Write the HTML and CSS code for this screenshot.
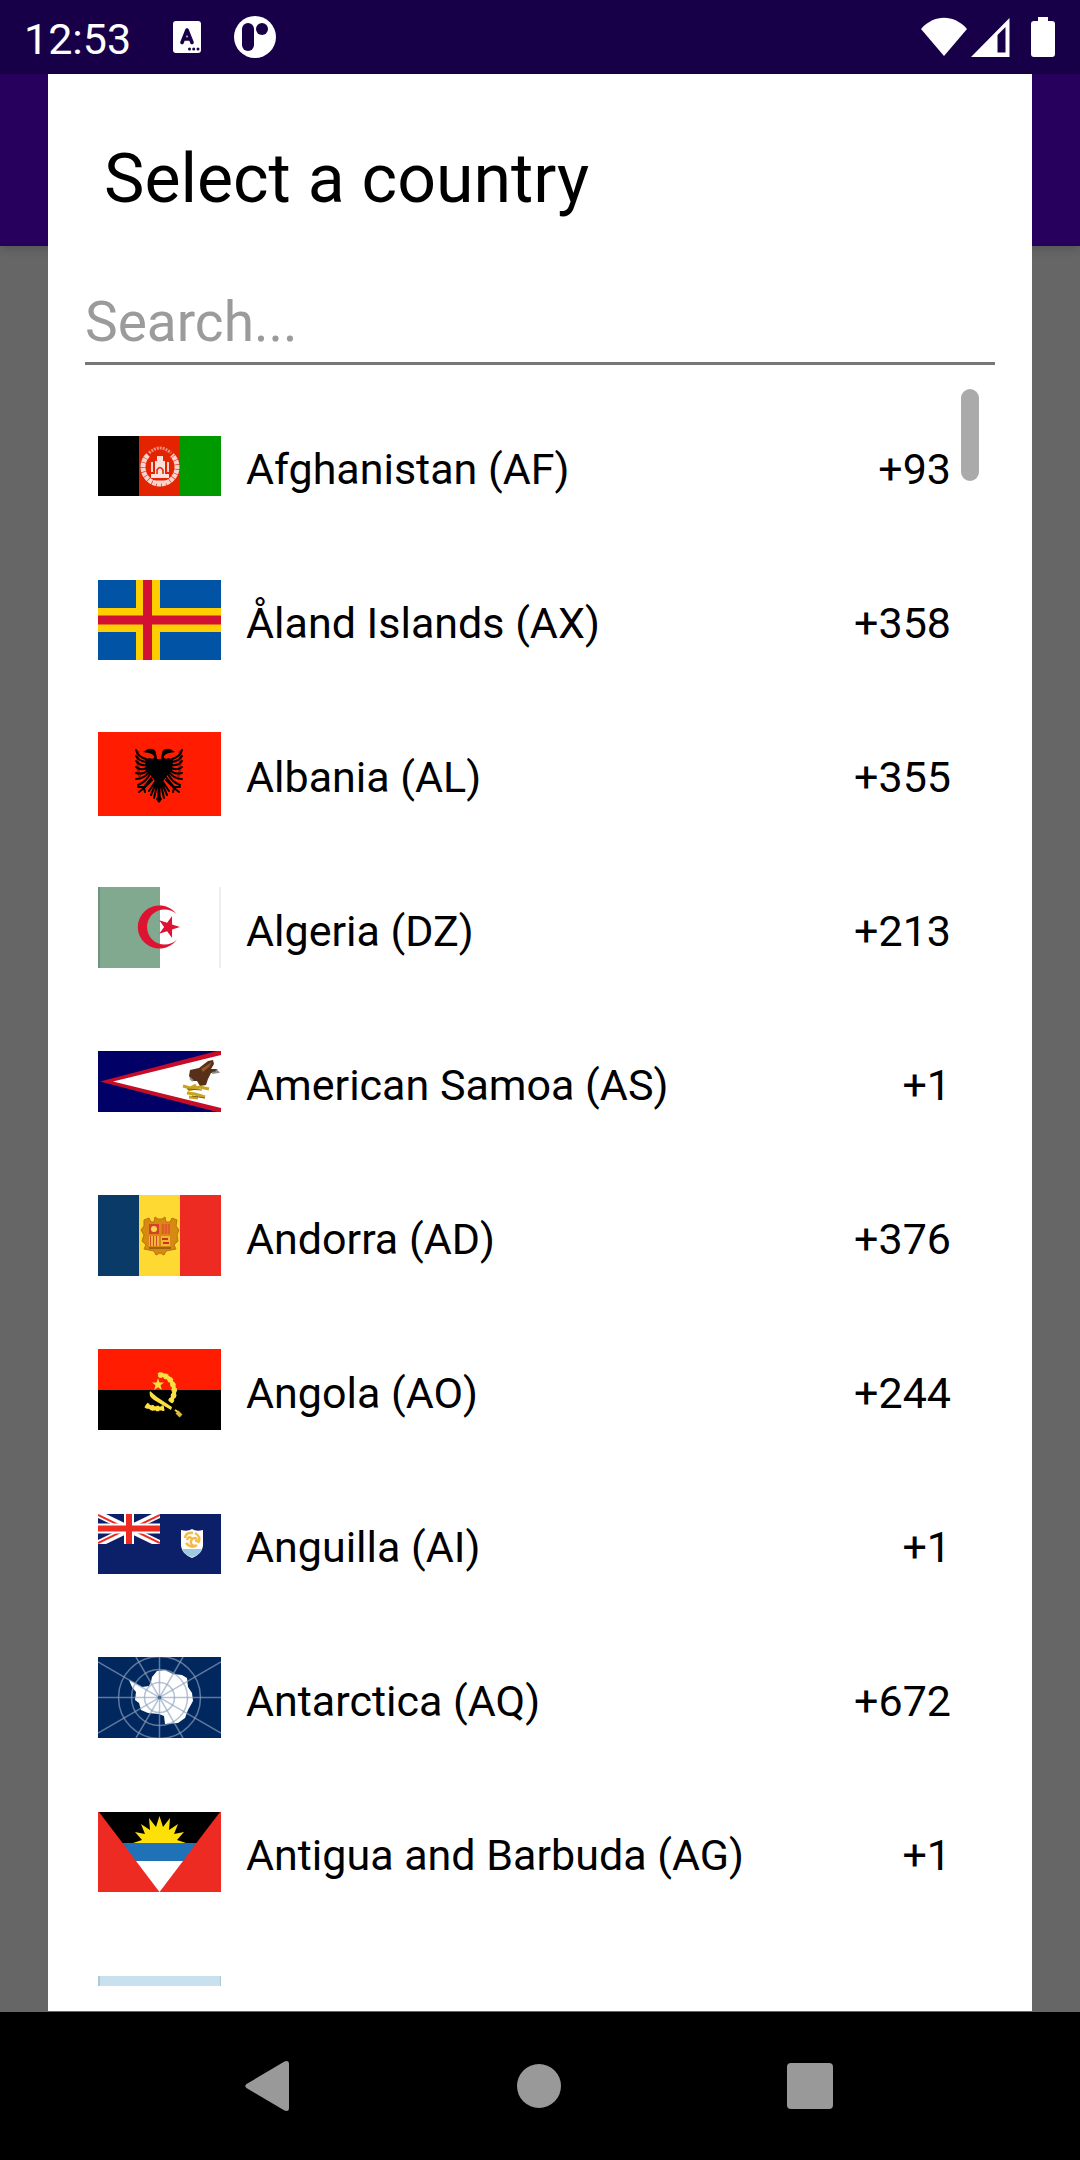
FILE: index.html
```
<!DOCTYPE html>
<html lang="en">
<head>
<meta charset="utf-8">
<meta name="viewport" content="width=device-width, initial-scale=1">
<title>Select a country</title>
<link rel="stylesheet" href="styles.css">
</head>
<body>
<header class="status">
  <time class="clock">12:53</time>
  <svg class="notice" width="28" height="32" viewBox="0 0 28 32" aria-hidden="true">
    <rect width="28" height="32" rx="3" fill="#fff"/>
    <path d="M9 21.500L14 9L19 21.500M11 18H17" fill="none" stroke="#180048" stroke-width="3.600" stroke-linecap="round" stroke-linejoin="round"/>
    <g fill="#180048"><circle cx="16.500" cy="28" r="1.500"/><circle cx="20.700" cy="28" r="1.500"/><circle cx="25" cy="28" r="1.500"/></g>
  </svg>
  <svg class="notice-round" width="42" height="42" viewBox="0 0 42 42" aria-hidden="true">
    <circle cx="21" cy="21" r="21" fill="#fff"/>
    <rect x="8" y="7" width="12" height="28" rx="6" fill="#180048"/>
    <circle cx="28" cy="13" r="6" fill="#180048"/>
  </svg>
  <svg class="signals" width="136" height="42" viewBox="0 0 136 42" aria-hidden="true" fill="#fff">
    <path d="M1 13C14-2 34-2 47 13L24 40Z"/>
    <path fill-rule="evenodd" d="M51 41L89.500 2V41ZM77.500 19V36.500H85.500V11Z"/>
    <path d="M118 1H128V5H132Q135 5 135 8V38Q135 41 132 41H114Q111 41 111 38V8Q111 5 114 5H118Z"/>
  </svg>
</header>

<div class="screen">
  <div class="appbar"></div>
  <main class="dialog" role="dialog" aria-labelledby="title">
    <h1 class="title" id="title">Select a country</h1>
    <input class="search" type="text" placeholder="Search..." aria-label="Search countries">
    <div class="list-area">
      <ul class="list">
        <li><button class="row" type="button">
          <svg class="flag" viewBox="0 0 123 60" aria-hidden="true">
            <path fill="#000" d="M0 0H41V60H0z"/><path fill="#e42300" d="M41 0H82V60H41z"/><path fill="#090" d="M82 0H123V60H82z"/>
            <g fill="none" stroke="#f6d5d0">
              <path d="M50 19A17 17 0 1 0 74 19" stroke-width="5" stroke-dasharray="4 .6"/>
              <path d="M51 17Q62 7 73 17" stroke="#ee8f7f" stroke-width="3" stroke-dasharray="2 1"/>
              <path d="M54 26V36M70 26V36" stroke-width="2"/>
            </g>
            <path fill="#f9e0dc" d="M59 20H65V25H67V38H71V42H53V38H57V25H59z"/>
            <path d="M59 38V34Q62 29 65 34V38" fill="none" stroke="#e42300" stroke-width="1.500"/>
            <path d="M55 46H69" stroke="#f6d5d0" stroke-width="3"/>
          </svg><span class="name">Afghanistan (AF)</span><span class="code">+93</span></button></li>
        <li><button class="row" type="button">
          <svg class="flag" viewBox="0 0 123 80" aria-hidden="true">
            <path fill="#0053a5" d="M0 0H123V80H0z"/>
            <path stroke="#ffce00" stroke-width="24" d="M50 0V80M0 40H123"/>
            <path stroke="#d21034" stroke-width="9" d="M49.500 0V80M0 40H123"/>
          </svg><span class="name">Åland Islands (AX)</span><span class="code">+358</span></button></li>
        <li><button class="row" type="button">
          <svg class="flag" viewBox="0 0 123 84" aria-hidden="true">
            <path fill="#ff1c00" d="M0 0H123V84H0z"/>
            <g id="half-eagle" stroke="#000" stroke-linecap="round">
              <path stroke="none" d="M61 55L54 45L48 38L47 28L51 26Q57 28 56 24Q55 22 51 21L45 20L50 17Q57 16 58 21L59 27H61z"/>
              <path fill="none" stroke-width="2" d="M48 27Q40 25 38 18M48 30Q41 29 38 24M48 33Q42 34 38 29M49 36Q43 39 38 35M50 38Q45 43 38 41M51 40Q46 47 38 47M52 42Q48 50 40 53M54 45L46 55M54 48L46 56M46 55L40 55M46 56L41 60M46 56L47 60M57 50L51 59M58 51L53 63M59 53L56 66M60.500 54V69"/>
              <path fill="none" stroke-width="3" d="M40 20Q39 38 42 45" stroke-opacity=".35"/>
            </g>
            <use href="#half-eagle" transform="matrix(-1 0 0 1 122 0)"/>
            <path d="M61 62L64 67L61 71L58 67z"/>
          </svg><span class="name">Albania (AL)</span><span class="code">+355</span></button></li>
        <li><button class="row" type="button">
          <svg class="flag flag-odd" viewBox="0 0 123 81" aria-hidden="true">
            <path fill="#fff" d="M0 0H123V81H0z"/><path fill="#80a98f" d="M0 0H62V81H0z"/>
            <path fill="#6d947c" d="M0 0H2V81H0z"/><path fill="#eee" d="M121 0H123V81H121z"/>
            <path fill="#dc1432" d="M79 27.500A21.600 21.600 0 1 0 79 52.500A17.600 17.600 0 1 1 79 27.500z"/>
            <path fill="#dc1432" d="M82 40L74.060 42.590L74.050 50.940L69.140 44.180L61.200 46.760L66.100 40L61.200 33.240L69.140 35.820L74.050 29.060L74.060 37.410z"/>
          </svg><span class="name">Algeria (DZ)</span><span class="code">+213</span></button></li>
        <li><button class="row" type="button">
          <svg class="flag flag-odd" viewBox="0 0 123 61" aria-hidden="true">
            <path fill="#006" d="M0 0H123V61H0z"/><path fill="#c60c26" d="M2 30.500L119 0H123V61H119z"/><path fill="#fff" d="M15 30.500L123 4V57z"/>
            <path fill="#58301a" d="M92 19L101 17L110 10L115 9L116 13L113 18L119 18L120 21L113 22L110 28L108 34L102 35L99 30L94 30L91 25z"/>
            <path fill="#96552d" d="M103 18L114 11L111 16L105 21z"/>
            <path fill="none" stroke="#8c8c8c" stroke-width="2" d="M92 27L95 30M114 22L120 21L118 19"/>
            <path fill="none" stroke="#c9a51f" stroke-width="3" d="M85 35L92 37L98 34M90 39L102 36L111 38M89 42L97 43L107 46M91 46L100 47"/>
            <path stroke="#80601c" stroke-width="1" d="M89 38L104 39M94 45L107 47"/>
          </svg><span class="name">American Samoa (AS)</span><span class="code">+1</span></button></li>
        <li><button class="row" type="button">
          <svg class="flag flag-odd" viewBox="0 0 123 81" aria-hidden="true">
            <path fill="#0a3a68" d="M0 0H41V81H0z"/><path fill="#fdd932" d="M41 0H82V81H41z"/><path fill="#ee2b23" d="M82 0H123V81H82z"/>
            <path fill="#d68a12" stroke="#bd730d" d="M57 22L60 24H64L67 22L68 27H72L74 23L79 25L78 31L81 35L79 40L80 46L76 50L78 54L68 56L66 60L62 58L58 60L56 56L46 54L48 50L44 46L46 40L43 35L46 31L46 25L51 23L53 27H56z"/>
            <path fill="#d5402b" d="M51 29H61V39H51z"/><path fill="#e8702c" d="M63 29H72V39H63z"/>
            <path fill="#f4b437" d="M51 41H61V51H51zM63 41H72V51H63z"/>
            <circle cx="56" cy="34" r="3" fill="#fbd64c"/>
            <path stroke="#d9482b" stroke-width="1" d="M52.500 41V51M55.500 41V51M58.500 41V51M65 29V39M68 29V39M71 29V39"/>
            <path stroke="#c5361f" stroke-width="2" d="M64 44H70M65 48H71"/><path stroke="#9e620f" stroke-width="2" d="M51 53H73"/>
          </svg><span class="name">Andorra (AD)</span><span class="code">+376</span></button></li>
        <li><button class="row" type="button">
          <svg class="flag flag-odd" viewBox="0 0 123 81" aria-hidden="true">
            <path fill="#ff1c00" d="M0 0H123V41H0z"/><path d="M0 41H123V81H0z"/>
            <g fill="none" stroke="#fbe042">
              <path stroke-width="4" d="M60 26Q68 25 73 32Q80 43 72 53M48 56Q55 61 66 59"/>
              <path stroke-width="5.500" stroke-dasharray="3 2.500" d="M61 26Q69 26 73 32Q80 43 72 53M48 56Q55 61 66 59"/>
              <path stroke-width="2" d="M77 61L80 63"/><path stroke="#d9b93c" stroke-width="4" d="M79 63L83 67"/>
            </g>
            <path fill="#fbe042" d="M52 42L59 48L74 58L73 61L56 51Q50 47 52 42zM60 29L61.500 33.500H66L62.500 36.300L63.800 41L60 38.300L56.200 41L57.500 36.300L54 33.500H58.500z"/>
          </svg><span class="name">Angola (AO)</span><span class="code">+244</span></button></li>
        <li><button class="row" type="button">
          <svg class="flag" viewBox="0 0 123 60" aria-hidden="true">
            <path fill="#0c2069" d="M0 0H123V60H0z"/>
            <svg width="62" height="30" viewBox="0 0 62 30">
              <path stroke="#fff" stroke-width="7" d="M0 0L62 30M62 0L0 30"/>
              <path stroke="#ee2b23" stroke-width="2" d="M0 1L31 16M31 14L62 29M62 1L31 16M31 14L0 29"/>
              <path stroke="#fff" stroke-width="10" d="M31 0V30M0 14.500H62"/>
              <path stroke="#ee2b23" stroke-width="6" d="M31 0V30M0 14.500H62"/>
            </svg>
            <path fill="#fff" d="M83 16Q90 18 94 15Q98 18 105 16V32Q104 40 94 44Q84 40 83 32z"/>
            <path fill="#9dcae1" d="M84 35H104Q102 41 94 43Q86 41 84 35z"/>
            <path fill="none" stroke="#f8b944" stroke-width="2.500" d="M87 24Q88 18 95 19M97 19Q104 23 100 29M99 31Q93 35 88 29M94 25Q91 21 89 26M94 25Q100 22 98 28M94 25Q91 30 96 32"/>
          </svg><span class="name">Anguilla (AI)</span><span class="code">+1</span></button></li>
        <li><button class="row" type="button">
          <svg class="flag flag-odd" viewBox="0 0 123 81" aria-hidden="true">
            <path fill="#00285f" d="M0 0H123V81H0z"/>
            <path fill="#fff" d="M31 23L37 26L44 30L51 29L53 25L54 20L59 14L67 13L75 17L84 18L89 21L90 30L94 36L95 44L90 53L87 61L80 66L67 67L66 59L61 57L50 56L43 53L41 46L37 43L38 35L34 30z"/>
            <g fill="none" stroke="#8fa3bd" stroke-opacity=".65" stroke-width="1.500">
              <circle cx="61.500" cy="40.500" r="15"/><circle cx="61.500" cy="40.500" r="28"/><circle cx="61.500" cy="40.500" r="41"/>
              <path d="M0 40.500H123M61.500 0V81M0 5L123 76M123 5L0 76M38 0L85 81M85 0L38 81"/>
            </g>
            <circle cx="61.500" cy="40.500" r="2" fill="#4c668c"/>
          </svg><span class="name">Antarctica (AQ)</span><span class="code">+672</span></button></li>
        <li><button class="row" type="button">
          <svg class="flag" viewBox="0 0 123 80" aria-hidden="true">
            <path fill="#ee2b23" d="M0 0H123V80H0z"/><path d="M1 0H122L98.400 31H24.600z"/>
            <path fill="#1f72b8" d="M24.600 31H98.400L85 49H38z"/><path fill="#fff" d="M38 49H85L61.500 80z"/>
            <path fill="#fde008" d="M35 31L44 28L37 20L47 22L43 12L52 18L51 6L58 15L61.500 4L65 15L72 6L71 18L80 12L76 22L86 20L79 28L88 31z"/>
          </svg><span class="name">Antigua and Barbuda (AG)</span><span class="code">+1</span></button></li>
        <li><button class="row" type="button" aria-label="Argentina (AR) +54">
          <svg class="flag" viewBox="0 0 123 60" aria-hidden="true">
            <path fill="#c9e0ee" d="M0 0H123V60H0z"/><path fill="#fff" d="M0 20H123V40H0z"/>
            <path fill="#b0c9d6" d="M0 0H2V20H0zM122 0H123V20H122z"/><circle cx="61.500" cy="30" r="7" fill="#f6b40e"/>
          </svg></button></li>
      </ul>
      <div class="thumb"></div>
    </div>
  </main>
</div>

<nav class="navbar" aria-label="System">
  <button class="key" type="button" aria-label="Back"><svg width="56" height="56" viewBox="0 0 56 56" fill="#999"><path d="M4.500 26L42.500 3.500Q47 2 47 6V50Q47 54 42.500 52.500L4.500 30Q2 28 4.500 26z"/></svg></button>
  <button class="key" type="button" aria-label="Home"><svg width="56" height="56" viewBox="0 0 56 56" fill="#999"><circle cx="27" cy="28" r="22"/></svg></button>
  <button class="key" type="button" aria-label="Recent apps"><svg width="56" height="56" viewBox="0 0 56 56" fill="#999"><rect x="5" y="5" width="46" height="46" rx="4"/></svg></button>
</nav>
</body>
</html>
```
FILE: styles.css
```
* {
  box-sizing: border-box;
}

body {
  margin: 0;
  height: 100vh;
  display: flex;
  flex-direction: column;
  background: #666;
  color: #000;
  font-family: Roboto, "Noto Sans", sans-serif;
}

button {
  border: 0;
  background: none;
  color: inherit;
  font: inherit;
}

.status {
  flex: none;
  height: 74px;
  display: flex;
  align-items: center;
  padding: 0 24px;
  background: #180048;
  color: #fff;
}

.clock {
  font-size: 43px;
  line-height: 48px;
  padding-top: 4px;
}

.notice {
  margin-left: 42px;
}

.notice-round {
  margin-left: 33px;
}

.signals {
  margin-left: auto;
}

.screen {
  flex: 1;
  min-height: 0;
  display: grid;
  grid-template: minmax(0, 1fr) / minmax(0, 1fr);
}

.appbar {
  grid-area: 1 / 1;
  height: 172px;
  background: #27005e;
  box-shadow: 0 2px 10px rgba(0, 0, 0, 0.2);
}

.dialog {
  grid-area: 1 / 1;
  display: flex;
  flex-direction: column;
  margin: 0 48px 1px;
  padding: 66px 0 25px;
  background: #fff;
  position: relative;
}

.title {
  margin: 0 56px 64px;
  font-size: 68px;
  font-weight: 400;
  line-height: 78px;
}

.search {
  margin: 0 37px 24px;
  height: 83px;
  padding: 0;
  border: 0;
  border-bottom: 3px solid #777;
  border-radius: 0;
  outline: 0;
  background: none;
  color: #000;
  font: 55px/80px Roboto, "Noto Sans", sans-serif;
}

.search::placeholder {
  color: #9b9b9b;
  opacity: 1;
}

.list-area {
  flex: 1;
  min-height: 0;
  overflow: hidden;
  position: relative;
}

.list {
  margin: 0;
  padding: 0;
  list-style: none;
}

.row {
  width: 100%;
  height: 154px;
  display: flex;
  align-items: center;
  gap: 25px;
  padding: 0 81px 0 50px;
  font-size: 43px;
  line-height: 52px;
  text-align: left;
}

.flag {
  flex: none;
  width: 123px;
}

/* keeps flags of odd height on whole pixels */
.flag-odd {
  margin-bottom: 1px;
}

.name,
.code {
  padding-top: 6px;
}

.name {
  flex: 1;
}

.thumb {
  position: absolute;
  top: 0;
  right: 53px;
  width: 18px;
  height: 92px;
  border-radius: 9px;
  background: #aaa;
}

.navbar {
  flex: none;
  height: 148px;
  display: flex;
  justify-content: center;
  background: #000;
}

.key {
  width: 25%;
  display: flex;
  align-items: center;
  justify-content: center;
  padding: 0;
}
```
